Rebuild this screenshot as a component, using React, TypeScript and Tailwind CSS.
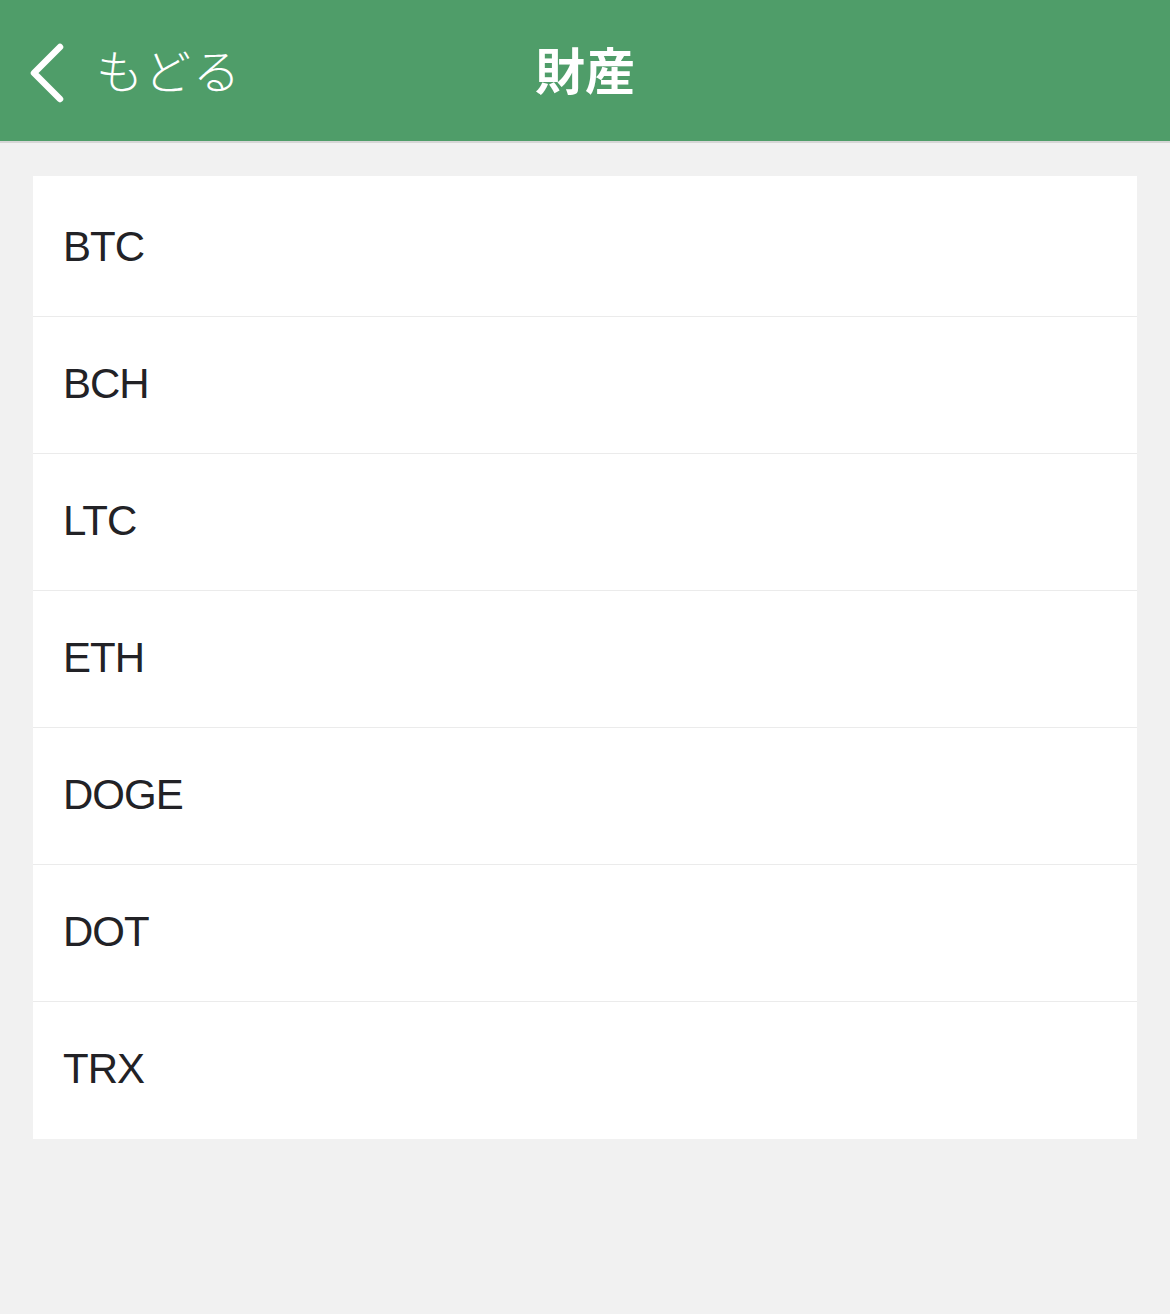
const coins = ["BTC", "BCH", "LTC", "ETH", "DOGE", "DOT", "TRX"];

export default function App() {
  return (
    <div
      className="min-h-[1314px] w-[1170px] bg-[#f1f1f1]"
      style={{ fontFamily: '"Liberation Sans", "Noto Sans CJK JP", sans-serif' }}
    >
      {/* Header */}
      <div className="relative flex h-[143px] items-center border-b-2 border-[#d6d6d6] bg-[#4f9d69] pt-[5px]">
        <div className="flex items-center pl-[29px] text-white">
          <svg width="36" height="60" viewBox="0 0 36 60" fill="none">
            <path
              d="M31 4 L5 30 L31 56"
              stroke="white"
              strokeWidth="6.5"
              strokeLinecap="round"
              strokeLinejoin="round"
            />
          </svg>
          <span className="ml-[31px] text-[47px] font-light tracking-[2px]">もどる</span>
        </div>
        <div className="absolute left-1/2 top-[5px] flex h-[136px] -translate-x-1/2 items-center text-[50px] font-bold text-white">
          財産
        </div>
      </div>

      {/* List */}
      <div className="mx-[33px] mt-[33px] bg-white pt-[4px]">
        {coins.map((c, i) => (
          <div
            key={c}
            className={`flex h-[137px] items-center pb-[4px] pl-[30px] text-[42px] tracking-[-1px] text-[#222226] ${
              i < coins.length - 1 ? "border-b border-[#ebebeb]" : ""
            }`}
          >
            {c}
          </div>
        ))}
      </div>
    </div>
  );
}
